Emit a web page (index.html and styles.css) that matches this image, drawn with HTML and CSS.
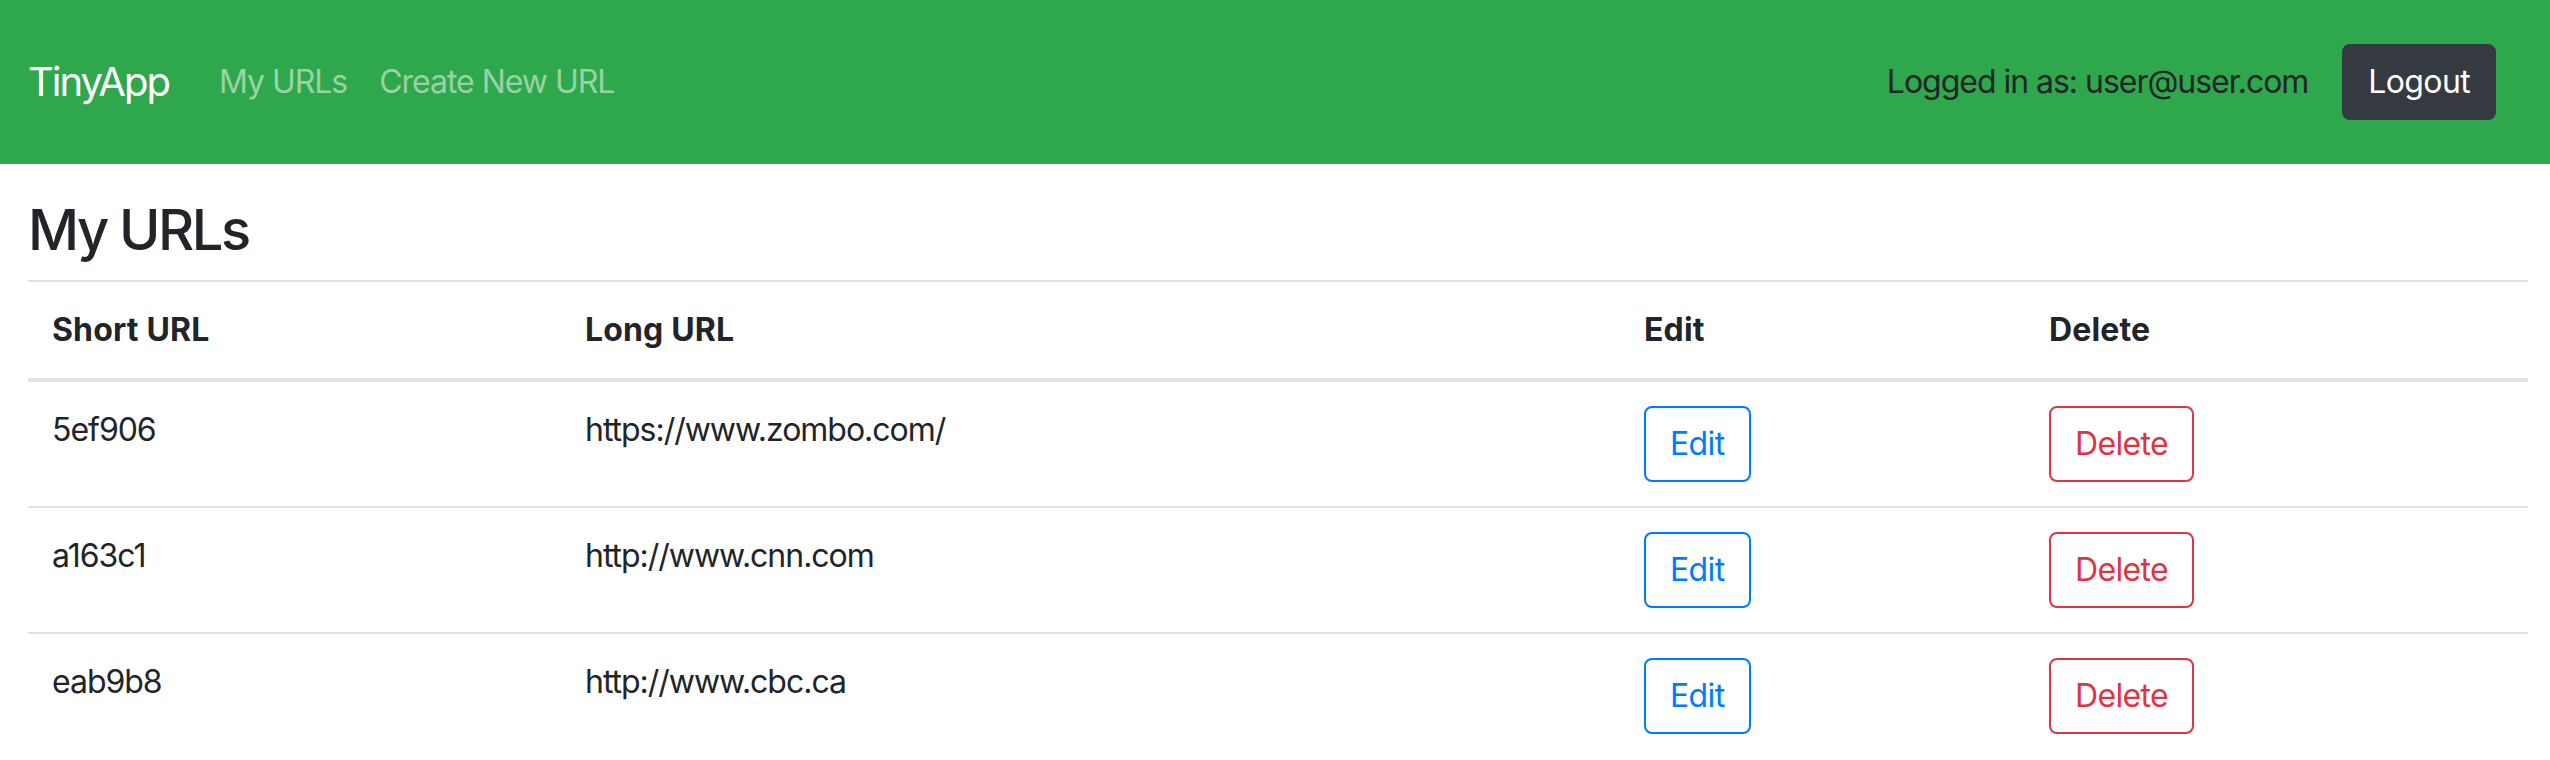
FILE: index.html
```html
<!DOCTYPE html>
<html lang="en">
<head>
<meta charset="utf-8">
<title>TinyApp</title>
<link rel="stylesheet" href="styles.css">
</head>
<body>
<nav class="navbar">
  <a class="brand" href="#">TinyApp</a>
  <ul class="nav">
    <li><a class="nav-link" href="#">My URLs</a></li>
    <li><a class="nav-link" href="#">Create New URL</a></li>
  </ul>
  <div class="user">
    <span class="user-text">Logged in as: user@user.com</span>
    <button class="btn btn-dark">Logout</button>
  </div>
</nav>
<main class="container">
  <h1 class="title">My URLs</h1>
  <table class="table">
    <colgroup>
      <col class="c1"><col class="c2"><col class="c3"><col class="c4">
    </colgroup>
    <thead>
      <tr><th>Short URL</th><th>Long URL</th><th>Edit</th><th>Delete</th></tr>
    </thead>
    <tbody>
      <tr>
        <td>5ef906</td><td>https://www.zombo.com/</td>
        <td><button class="btn btn-outline-primary">Edit</button></td>
        <td><button class="btn btn-outline-danger">Delete</button></td>
      </tr>
      <tr>
        <td>a163c1</td><td>http://www.cnn.com</td>
        <td><button class="btn btn-outline-primary">Edit</button></td>
        <td><button class="btn btn-outline-danger">Delete</button></td>
      </tr>
      <tr>
        <td>eab9b8</td><td>http://www.cbc.ca</td>
        <td><button class="btn btn-outline-primary">Edit</button></td>
        <td><button class="btn btn-outline-danger">Delete</button></td>
      </tr>
    </tbody>
  </table>
</main>
</body>
</html>
```
FILE: styles.css
```css
* { box-sizing: border-box; }
html, body { margin: 0; padding: 0; }
body {
  font-family: "Inter", "Liberation Sans", sans-serif;
  font-size: 32px;
  line-height: 48px;
  color: #212529;
  background: #fff;
  letter-spacing: -0.032em;
}
.navbar {
  display: flex;
  align-items: center;
  height: 164px;
  padding: 0 54px 0 28px;
  background: #2fa74c;
}
.brand {
  font-size: 40px;
  line-height: 60px;
  letter-spacing: -0.05em;
  color: #fff;
  text-decoration: none;
  margin-right: 34px;
}
.nav {
  display: flex;
  list-style: none;
  margin: 0;
  padding: 0;
  flex: 1;
}
.nav-link {
  display: block;
  padding: 0 16px;
  color: rgba(255,255,255,.5);
  text-decoration: none;
}
.user {
  display: flex;
  align-items: center;
  gap: 34px;
}
.btn {
  display: inline-block;
  font-family: inherit;
  font-size: 32px;
  line-height: 48px;
  letter-spacing: -0.02em;
  padding: 12px 24px;
  border: 2px solid transparent;
  border-radius: 8px;
  background: transparent;
  cursor: pointer;
}
.btn-dark { background: #343a40; border-color: #343a40; color: #fff; }
.btn-outline-primary { color: #007bff; border-color: #007bff; }
.btn-outline-danger { color: #dc3545; border-color: #dc3545; }
.container { padding: 0 22px 0 28px; }
.title {
  font-size: 56px;
  line-height: 67px;
  font-weight: 500;
  letter-spacing: -0.045em;
  margin: 33px 0 16px;
}
.table {
  width: 100%;
  border-collapse: collapse;
  table-layout: fixed;
}
.c1 { width: 533px; }
.c2 { width: 1059px; }
.c3 { width: 405px; }
.c4 { width: 503px; }
.table th, .table td {
  padding: 24px;
  text-align: left;
  vertical-align: top;
  border-top: 2px solid #dee2e6;
}
.table th {
  font-weight: 700;
  letter-spacing: 0.005em;
  vertical-align: bottom;
  border-bottom: 4px solid #dee2e6;
}
```
